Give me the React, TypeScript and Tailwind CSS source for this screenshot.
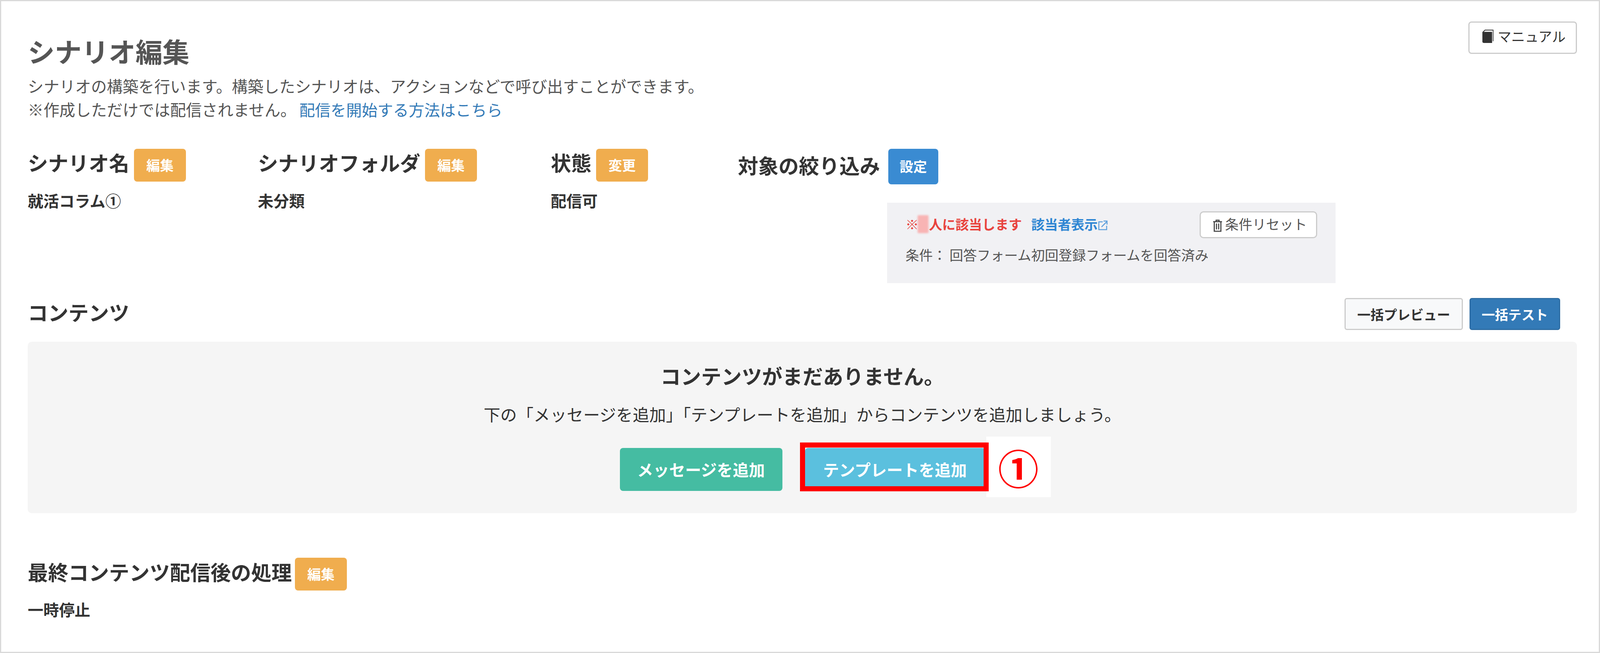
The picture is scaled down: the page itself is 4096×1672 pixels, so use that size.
import React from "react";

const Badge = ({ children, color = "bg-[#f0ad4e]", w = "w-[133px]", h = "h-[84px]" }: { children: React.ReactNode; color?: string; w?: string; h?: string }) => (
  <span className={`${color} ${w} ${h} flex items-center justify-center rounded-[8px] text-white font-bold text-[35px] leading-none shrink-0 pb-[4px]`}>{children}</span>
);

const Label = ({ children, pb = "pb-[14px]" }: { children: React.ReactNode; pb?: string }) => (
  <span className={`text-[52px] font-bold leading-[60px] text-[#333] whitespace-nowrap ${pb}`}>{children}</span>
);

const Value = ({ children }: { children: React.ReactNode }) => (
  <div className="mt-[28px] text-[40px] leading-[40px] font-bold text-[#333]">{children}</div>
);

const Field = ({ label, action, value, width }: { label: string; action: string; value: string; width: string }) => (
  <div className={`${width} shrink-0`}>
    <div className="flex items-center gap-[12px]">
      <Label>{label}</Label>
      <Badge>{action}</Badge>
    </div>
    <Value>{value}</Value>
  </div>
);

export default function App() {
  return (
    <div
      className="w-[4096px] h-[1672px] overflow-hidden bg-white border-[3px] border-[#d9d9d9] pl-[68px] pr-[56px] relative"
      style={{ fontFamily: '"Noto Sans CJK JP", "Noto Sans", sans-serif' }}
    >
      <div className="flex justify-between items-start">
        <div className="pt-[87px]">
          <h1 className="text-[69px] leading-[80px] font-bold text-[#555]">シナリオ編集</h1>
          <p className="mt-[20px] text-[40.5px] leading-[60px] text-[#555] whitespace-nowrap">
            シナリオの構築を行います。構築したシナリオは、アクションなどで呼び出すことができます。
            <br />
            ※作成しただけでは配信されません。
            <span className="ml-[8px] text-[40px] text-[#337ab7]">配信を開始する方法はこちら</span>
          </p>
        </div>
        <button className="mt-[52px] w-[278px] h-[83px] flex items-center justify-center gap-[8px] rounded-[8px] bg-white border-[3px] border-[#ccc] text-[35px] text-[#333] whitespace-nowrap pb-[8px] pl-[6px]">
          <svg width="32" height="38" viewBox="0 0 36 40" className="shrink-0">
            <path d="M1 8 L8 1 H33 V34 H31 V3 H9 L5 7 H29 V39 H5 Q1 39 1 35 Z" fill="#333" />
          </svg>
          マニュアル
        </button>
      </div>

      <div className="flex mt-[71px]">
        <Field label="シナリオ名" action="編集" value="就活コラム①" width="w-[589px]" />
        <Field label="シナリオフォルダ" action="編集" value="未分類" width="w-[750px]" />
        <Field label="状態" action="変更" value="配信可" width="w-[479px]" />
        <div className="shrink-0">
          <div className="flex items-center gap-[21px]">
            <Label pb="pb-[8px]">対象の絞り込み</Label>
            <Badge color="bg-[#3a8bd2]" w="w-[128px]" h="h-[91px]">設定</Badge>
          </div>
          <div className="ml-[382px] mt-[47px] w-[1148px] h-[206px] bg-[#f1f1f4] pl-[47px] pr-[47px] pt-[22px]">
            <div className="flex items-center justify-between h-[69px]">
              <div className="flex items-center text-[34px] leading-[40px] font-bold whitespace-nowrap pb-[4px]">
                <span className="text-[#e8443f]">※</span>
                <span className="w-[28px] h-[46px] bg-[#f8b4b4] rounded-[3px] blur-[2px] -ml-[3px] mr-[1px]" />
                <span className="text-[#e8443f]">人に該当します</span>
                <span className="ml-[24px] text-[#2f86d3]">該当者表示</span>
                <svg width="26" height="28" viewBox="0 0 26 28" fill="none" stroke="#5d9fdc" strokeWidth="2.5" className="mt-[6px]">
                  <path d="M13 5 H3 V25 H23 V15" />
                  <path d="M10 18 L23 5 M15 3 H24 V12" />
                </svg>
              </div>
              <button className="w-[301px] h-[69px] flex items-center justify-center gap-[5px] rounded-[10px] bg-white border-[3px] border-[#ccc] text-[35px] text-[#555] whitespace-nowrap pb-[4px] pl-[6px]">
                <svg width="28" height="32" viewBox="0 0 28 34" fill="none" stroke="#444" strokeWidth="3" className="mt-[8px] shrink-0">
                  <path d="M2 6 H26 M10 6 V2 H18 V6 M5 6 V32 H23 V6 M11 11 V27 M17 11 V27" />
                </svg>
                条件リセット
              </button>
            </div>
            <div className="mt-[22px] text-[35px] leading-[40px] text-[#555] whitespace-nowrap">条件： 回答フォーム初回登録フォームを回答済み</div>
          </div>
        </div>
      </div>

      <div className="flex items-center justify-between mt-[38px] pr-[43px]">
        <h2 className="text-[52px] leading-[60px] font-bold text-[#333] pb-[10px]">コンテンツ</h2>
        <div className="flex gap-[17px]">
          <button className="w-[303px] h-[82px] rounded-[6px] bg-[#f8f9fa] border-[3px] border-[#ccc] text-[34px] font-bold text-[#333] whitespace-nowrap">一括プレビュー</button>
          <button className="w-[232px] h-[82px] rounded-[6px] bg-[#337ab7] border-[3px] border-[#2e6da4] text-[34px] font-bold text-white whitespace-nowrap">一括テスト</button>
        </div>
      </div>

      <section className="mt-[30px] h-[439px] rounded-[10px] bg-[#f5f5f5] pt-[57px] flex flex-col items-center">
        <h3 className="text-[52px] leading-[60px] font-bold text-[#333] whitespace-nowrap">コンテンツがまだありません。</h3>
        <p className="mt-[43px] text-[42.5px] leading-[50px] text-[#333] whitespace-nowrap">下の「メッセージを追加」「テンプレートを追加」からコンテンツを追加しましょう。</p>
        <div className="mt-[62px] flex gap-[58px]">
          <button className="w-[416px] h-[110px] rounded-[8px] bg-[#45bca2] text-white text-[41px] font-bold whitespace-nowrap">メッセージを追加</button>
          <div className="relative">
            <button className="w-[461px] h-[110px] rounded-[8px] bg-[#5bc0de] text-white text-[41px] font-bold whitespace-nowrap">テンプレートを追加</button>
            <div className="absolute left-[464px] top-[-29px] w-[165px] h-[155px] bg-white flex items-center justify-center text-[#ff0000] text-[104px] leading-none font-bold">①</div>
            <div className="absolute -left-[13px] -right-[9px] -top-[14px] -bottom-[1px] border-[13px] border-[#ff0000]" />
          </div>
        </div>
      </section>

      <div className="mt-[114px] flex items-center gap-[8px]">
        <Label pb="pb-[12px]">最終コンテンツ配信後の処理</Label>
        <Badge>編集</Badge>
      </div>
      <Value>一時停止</Value>
    </div>
  );
}
